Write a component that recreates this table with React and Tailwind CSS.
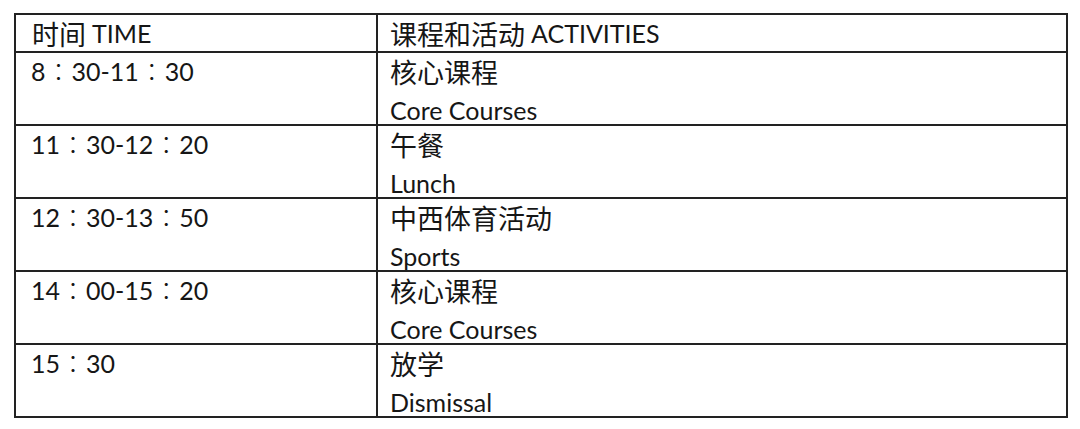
import React from "react";

const rows = [
  ["8", "30-11", "30", "核心课程", "Core Courses"],
  ["11", "30-12", "20", "午餐", "Lunch"],
  ["12", "30-13", "50", "中西体育活动", "Sports"],
  ["14", "00-15", "20", "核心课程", "Core Courses"],
  ["15", "30", null, "放学", "Dismissal"],
];

const latin = { fontFamily: "Lato, 'Liberation Sans', sans-serif" };

function Colon() {
  return (
    <span className="text-[24px] mx-[1px] font-light" style={{ fontFamily: "'Noto Sans CJK TC', sans-serif" }}>
      ：
    </span>
  );
}

function Zh({ children }) {
  return (
    <span className="text-[27px]" style={{ fontFamily: "'Noto Sans CJK SC', sans-serif" }}>
      {children}
    </span>
  );
}

export default function App() {
  return (
    <div className="w-[1080px] h-[429px] bg-white pt-[13px] pl-[14px]" style={latin}>
      <div className="w-[1054px] border-2 border-[#222] text-[#161616] text-[25px]">
        <div className="flex h-[36px]">
          <div className="w-[362px] border-r-2 border-[#222] pl-[16px] flex items-center leading-none">
            <Zh>时间</Zh>
            <span className="ml-[6px]">TIME</span>
          </div>
          <div className="flex-1 pl-[12px] flex items-center leading-none">
            <Zh>课程和活动</Zh>
            <span className="ml-[6px]">ACTIVITIES</span>
          </div>
        </div>
        {rows.map((r, i) => (
          <div key={i} className="flex h-[73px] border-t-2 border-[#222]">
            <div className="w-[362px] border-r-2 border-[#222] pl-[15px]">
              <div className="h-[36px] flex items-center leading-none">
                <span>{r[0]}</span>
                <Colon />
                <span>{r[1]}</span>
                {r[2] && <Colon />}
                {r[2] && <span>{r[2]}</span>}
              </div>
            </div>
            <div className="flex-1 pl-[12px]">
              <div className="h-[36px] flex items-center leading-none">
                <Zh>{r[3]}</Zh>
              </div>
              <div className="h-[42px] flex items-center leading-none">
                <span>{r[4]}</span>
              </div>
            </div>
          </div>
        ))}
      </div>
    </div>
  );
}
